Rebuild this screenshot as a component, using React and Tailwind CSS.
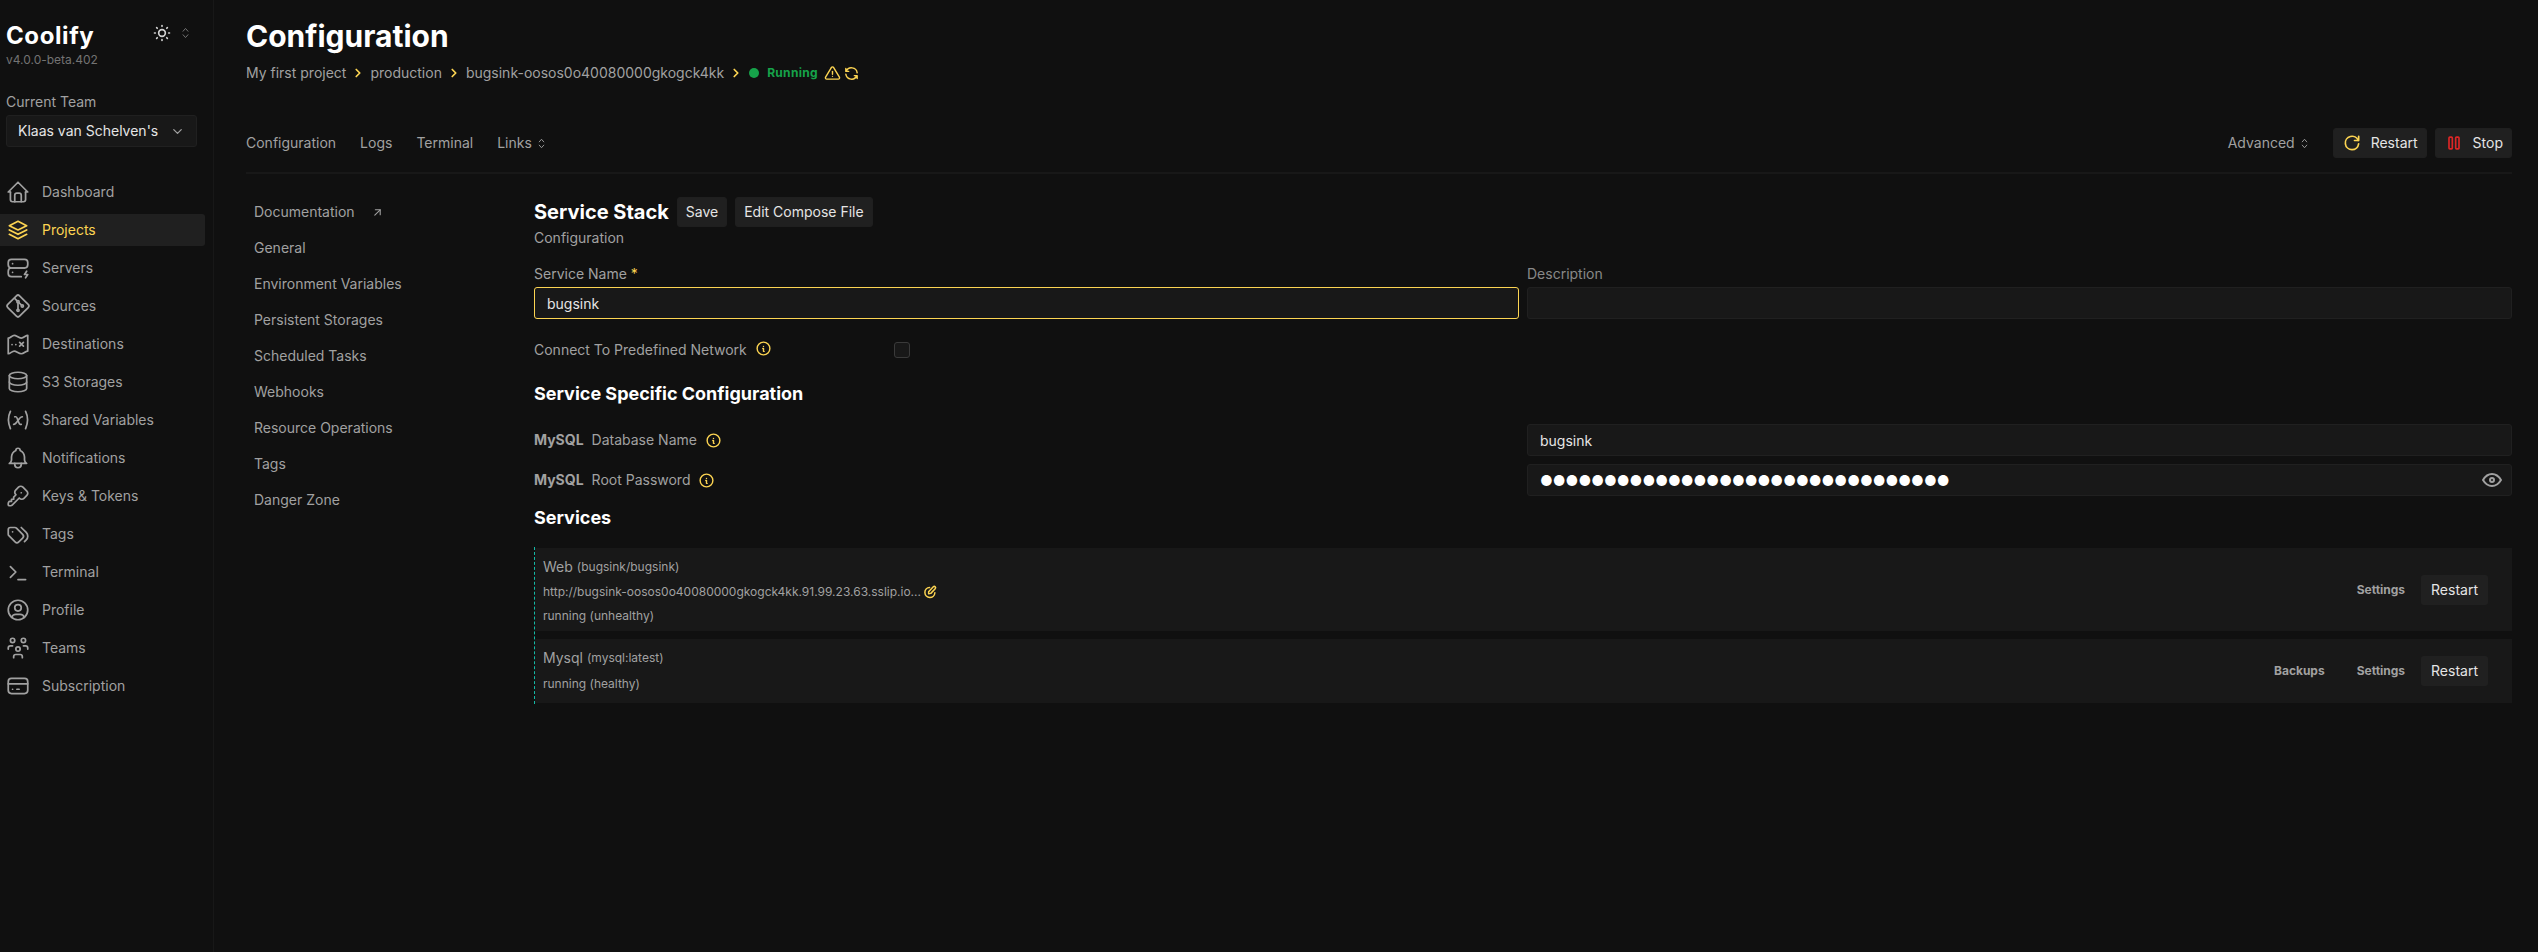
import React from "react";
import {
  TbHome, TbStack2, TbServerBolt, TbBrandGit, TbDatabase, TbVariable, TbBell, TbKey, TbTags,
  TbTerminal, TbUserCircle, TbUsersGroup, TbCreditCard, TbSun, TbChevronRight, TbAlertTriangle,
  TbRefresh, TbReload, TbPlayerPause, TbInfoCircle, TbEye, TbArrowUpRight, TbChevronDown,
} from "react-icons/tb";

const Selector = ({ className = "" }) => (
  <svg viewBox="0 0 12 20" className={className} fill="none" stroke="currentColor" strokeWidth="1.4" strokeLinecap="round" strokeLinejoin="round">
    <path d="M2.5 7.5 6 3.5l3.5 4M2.5 12.5l3.5 4 3.5-4" />
  </svg>
);

const MapIcon = ({ size = 26 }) => (
  <svg width={size} height={size} viewBox="0 0 24 24" fill="none" stroke="currentColor" strokeWidth="1.6" strokeLinecap="round" strokeLinejoin="round">
    <path d="M3 6.5c2 0 3.5-2.5 5.5-2.5s4 2.5 6.500 2.500S19 4 21 4v14.500c-2 0-3.500 2.500-6 2.500s-4.500-2.500-6.500-2.500S5 21 3 21z" />
    <path d="M13.500 10.500l3.500 3.500m0-3.500L13.500 14M6.500 12.500h.01M10 12.500h.01" />
  </svg>
);

const LinkEdit = ({ size = 16, className = "" }) => (
  <svg width={size} height={size} viewBox="0 0 24 24" className={className} fill="none" stroke="currentColor" strokeWidth="2.4" strokeLinecap="round" strokeLinejoin="round">
    <path d="M10.500 5.500a8 8 0 1 0 8.500 8.500" />
    <path d="M9 12.500 16.500 4.500a2 2 0 0 1 3 3l-7 7.500-3.500.5z" />
  </svg>
);

const nav = [
  ["Dashboard", TbHome],
  ["Projects", TbStack2, true],
  ["Servers", TbServerBolt],
  ["Sources", TbBrandGit],
  ["Destinations", MapIcon],
  ["S3 Storages", TbDatabase],
  ["Shared Variables", TbVariable],
  ["Notifications", TbBell],
  ["Keys & Tokens", TbKey],
  ["Tags", TbTags],
  ["Terminal", TbTerminal],
  ["Profile", TbUserCircle],
  ["Teams", TbUsersGroup],
  ["Subscription", TbCreditCard],
];

const sideMenu = ["General", "Environment Variables", "Persistent Storages", "Scheduled Tasks", "Webhooks", "Resource Operations", "Tags", "Danger Zone"];

const Btn = ({ children, className = "" }) => (
  <button className={`flex h-[30px] items-center rounded-[3px] border border-[#1f1f1f] bg-[#202020] px-2 text-sm text-neutral-200 ${className}`}>{children}</button>
);

const Info = ({ className = "" }) => <TbInfoCircle size={17} className={`shrink-0 text-[#fcd452] ${className}`} />;

const Crumb = ({ children }) => (
  <>
    <span>{children}</span>
    <TbChevronRight size={14} strokeWidth={3} className="mx-[5px] text-[#fcd452]" />
  </>
);

const inputCls = "h-8 w-full rounded-[3px] border border-[#202020] bg-[#181818] px-3 text-sm text-neutral-200 outline-none";

const Action = ({ children }) => <a className="px-4 text-xs font-bold text-neutral-400">{children}</a>;

export default function App() {
  return (
    <div className="flex min-h-[952px] w-full bg-[#101010] font-['Inter',sans-serif] text-sm text-neutral-400">
      <aside className="flex w-[214px] shrink-0 flex-col border-r border-[#181818]">
        <div className="flex items-start justify-between pl-[6px] pr-[23px] pt-5">
          <div>
            <div className="text-2xl font-bold tracking-wide text-white">Coolify</div>
            <div className="text-xs text-neutral-500">v4.0.0-beta.402</div>
          </div>
          <div className="flex items-center gap-[9px] pt-[3px] text-neutral-300">
            <TbSun size={20} />
            <Selector className="h-[14px] w-[9px] text-neutral-500" />
          </div>
        </div>
        <div className="mt-6 pl-[6px]">
          <div>Current Team</div>
          <div className="mt-[3px] flex h-8 w-[191px] items-center justify-between rounded-[3px] border border-[#202020] bg-[#181818] pl-[11px] pr-[11px] text-neutral-200">
            <span>Klaas van Schelven's</span>
            <TbChevronDown size={15} className="text-neutral-400" />
          </div>
        </div>
        <nav className="mt-[29px] flex w-[205px] flex-col gap-[6px]">
          {nav.map(([label, Icon, active]) => (
            <div key={label} className={`flex h-8 items-center gap-[11px] pl-[5px] ${active ? "rounded-r-[3px] bg-[#202020] text-[#fcd452]" : ""}`}>
              <Icon size={26} className="shrink-0" strokeWidth={1.6} />
              <span>{label}</span>
            </div>
          ))}
        </nav>
      </aside>

      <main className="min-w-0 flex-1 pl-8 pr-[26px] pt-[18px]">
        <h1 className="text-3xl font-bold text-white">Configuration</h1>
        <div className="mt-[9px] flex h-5 items-center">
          <Crumb>My first project</Crumb>
          <Crumb>production</Crumb>
          <Crumb>bugsink-oosos0o40080000gkogck4kk</Crumb>
          <span className="ml-px h-[10px] w-[10px] rounded-full bg-[#16a34a]" />
          <span className="ml-[8px] text-xs font-bold tracking-wide text-[#16a34a]">Running</span>
          <TbAlertTriangle size={17} className="ml-[6px] text-[#fcd452]" />
          <TbRefresh size={17} className="ml-[2px] text-[#fcd452]" />
        </div>

        <div className="mt-[45px] flex h-[30px] items-center">
          <span>Configuration</span>
          <span className="ml-6">Logs</span>
          <span className="ml-6">Terminal</span>
          <span className="ml-6">Links</span>
          <Selector className="ml-[5px] h-[13px] w-[9px]" />
          <span className="ml-auto">Advanced</span>
          <Selector className="ml-[5px] h-[13px] w-[9px]" />
          <Btn className="ml-6 gap-[9px]"><TbReload size={20} className="text-[#fcd452]" />Restart</Btn>
          <Btn className="ml-2 gap-[9px]"><TbPlayerPause size={20} className="text-[#dc2626]" />Stop</Btn>
        </div>
        <div className="mt-[14px] h-[2px] bg-[#181818]" />

        <div className="mt-5 flex">
          <div className="w-[288px] shrink-0">
            <div className="flex h-9 items-center px-2">
              <span>Documentation</span>
              <TbArrowUpRight size={13} className="ml-4" />
            </div>
            {sideMenu.map((s) => (
              <div key={s} className="flex h-9 items-center px-2">{s}</div>
            ))}
          </div>

          <div className="min-w-0 flex-1 pt-[3px]">
            <div className="flex h-[30px] items-center">
              <h2 className="text-xl font-bold text-white">Service Stack</h2>
              <Btn className="ml-2">Save</Btn>
              <Btn className="ml-2">Edit Compose File</Btn>
            </div>
            <div className="mt-px h-5 leading-5">Configuration</div>

            <div className="mt-4 grid grid-cols-2 gap-2">
              <div>
                <div className="flex h-5 items-center gap-1">Service Name <span className="text-[#fcd452]">*</span></div>
                <input readOnly value="bugsink" className={`mt-[3px] ${inputCls} border-[#fcd452]`} />
              </div>
              <div>
                <div className="flex h-5 items-center text-[#888888]">Description</div>
                <input readOnly value="" className={`mt-[3px] ${inputCls}`} />
              </div>
            </div>

            <div className="mt-[14px] flex h-[34px] w-[376px] items-center">
              <span>Connect To Predefined Network</span>
              <Info className="ml-[8px] -translate-y-[2px]" />
              <span className="ml-auto h-4 w-4 rounded-[3px] border border-[#3a3a3a] bg-[#181818]" />
            </div>

            <h3 className="mt-[13px] text-lg font-bold text-white">Service Specific Configuration</h3>

            <div className="mt-4 grid grid-cols-2 gap-x-2 gap-y-2">
              <div className="flex h-8 items-center">
                <b className="mr-2 font-bold">MySQL</b>Database Name<Info className="ml-2" />
              </div>
              <input readOnly value="bugsink" className={inputCls} />
              <div className="flex h-8 items-center">
                <b className="mr-2 font-bold">MySQL</b>Root Password<Info className="ml-2" />
              </div>
              <div className="relative">
                <input readOnly value={"●".repeat(32)} className={`${inputCls} pr-10 text-white`} />
                <TbEye size={24} className="absolute right-[8px] top-[4px] text-neutral-400" />
              </div>
            </div>

            <h3 className="mt-2 text-lg font-bold text-white">Services</h3>

            <div className="mt-[15px] flex flex-col gap-2 border-l border-dashed border-[#14b8a6] py-px pl-0">
              <div className="flex h-[83px] items-center bg-[#181818] pr-6">
                <div className="flex flex-col pl-2">
                  <div className="flex h-5 items-center gap-1 pt-[2px]">Web <span className="text-xs">(bugsink/bugsink)</span></div>
                  <div className="mt-2 flex h-4 items-center gap-[2px] text-xs">
                    http://bugsink-oosos0o40080000gkogck4kk.91.99.23.63.sslip.io...
                    <LinkEdit size={15} className="text-[#fcd452]" />
                  </div>
                  <div className="mt-2 h-4 text-xs leading-4">running (unhealthy)</div>
                </div>
                <div className="ml-auto flex items-center">
                  <Action>Settings</Action>
                  <Btn className="border-transparent px-[9px]">Restart</Btn>
                </div>
              </div>
              <div className="flex h-[64px] items-center bg-[#181818] pr-6">
                <div className="flex flex-col pb-[2px] pl-2">
                  <div className="flex h-5 items-center gap-1">Mysql <span className="text-xs">(mysql:latest)</span></div>
                  <div className="mt-2 h-4 text-xs leading-4">running (healthy)</div>
                </div>
                <div className="ml-auto flex items-center">
                  <Action>Backups</Action>
                  <Action>Settings</Action>
                  <Btn className="border-transparent px-[9px]">Restart</Btn>
                </div>
              </div>
            </div>
          </div>
        </div>
      </main>
    </div>
  );
}
